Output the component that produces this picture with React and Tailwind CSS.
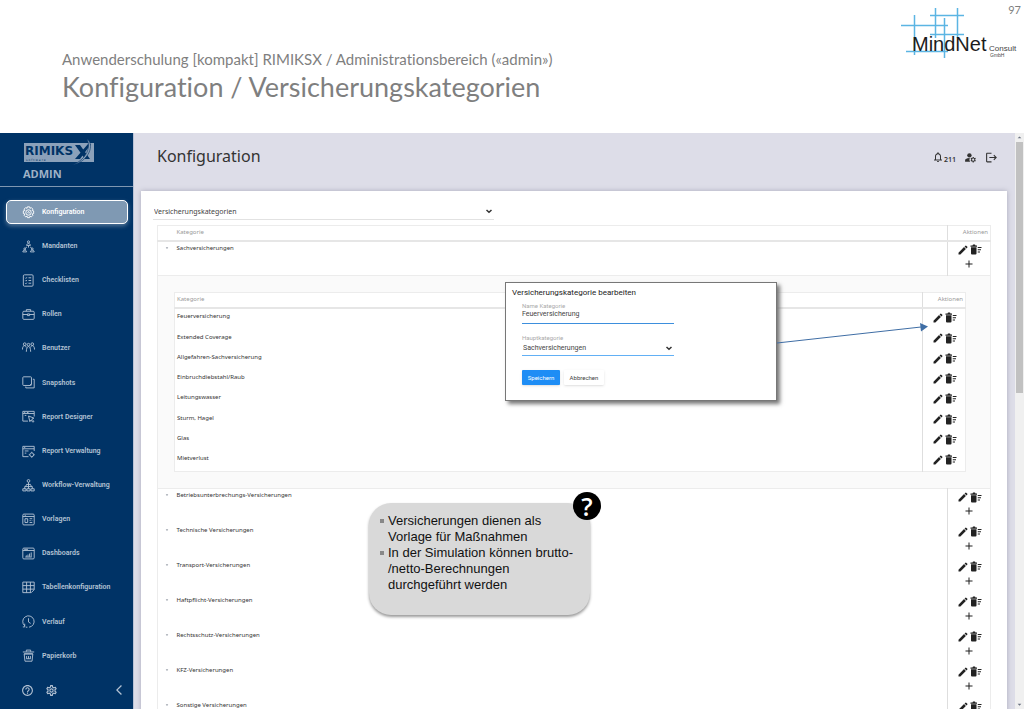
import {
  MdAdd,
  MdEdit,
  MdHelpOutline,
  MdLogout,
  MdManageAccounts,
  MdNotificationsNone,
  MdOutlineSettings,
  MdArrowBackIosNew,
  MdArrowDropDown,
  MdArrowDropUp,
} from "react-icons/md";

const menu = [
  { label: "Konfiguration", icon: "gear", active: true },
  { label: "Mandanten", icon: "clients" },
  { label: "Checklisten", icon: "checklist" },
  { label: "Rollen", icon: "briefcase" },
  { label: "Benutzer", icon: "users" },
  { label: "Snapshots", icon: "snapshots" },
  { label: "Report Designer", icon: "designer" },
  { label: "Report Verwaltung", icon: "reports" },
  { label: "Workflow-Verwaltung", icon: "workflow" },
  { label: "Vorlagen", icon: "templates" },
  { label: "Dashboards", icon: "dashboard" },
  { label: "Tabellenkonfiguration", icon: "table" },
  { label: "Verlauf", icon: "history" },
  { label: "Papierkorb", icon: "trash" },
];

const subCategories = [
  "Feuerversicherung",
  "Extended Coverage",
  "Allgefahren-Sachversicherung",
  "Einbruchdiebstahl/Raub",
  "Leitungswasser",
  "Sturm, Hagel",
  "Glas",
  "Mietverlust",
];

const categories = [
  "Betriebsunterbrechungs-Versicherungen",
  "Technische Versicherungen",
  "Transport-Versicherungen",
  "Haftpflicht-Versicherungen",
  "Rechtsschutz-Versicherungen",
  "KFZ-Versicherungen",
  "Sonstige Versicherungen",
];

const iconShapes = {
  gear: (
    <>
      <path d="M10 1.500h4l.7 2.800 2.500-1.400 2.900 2.900-1.400 2.500 2.800.7v5l-2.800.7 1.400 2.500-2.900 2.900-2.500-1.400-.7 2.800h-4l-.7-2.800-2.500 1.400-2.900-2.900 1.400-2.500-2.800-.7V9l2.800-.7-1.400-2.500 2.900-2.900 2.500 1.400z" />
      <circle cx="12" cy="12" r="5" />
      <path d="M10 11l3 3M11.500 9.500l3 3" />
    </>
  ),
  clients: (
    <>
      <circle cx="12" cy="3.500" r="2" />
      <path d="M8.500 10c0-4.500 7-4.500 7 0zM12 10v4M9 13l-3 2M15 13l3 2" />
      <circle cx="5" cy="16.500" r="1.700" />
      <circle cx="19" cy="16.500" r="1.700" />
      <path d="M1.500 22c0-4.500 7-4.500 7 0zM15.500 22c0-4.500 7-4.500 7 0z" />
    </>
  ),
  checklist: (
    <>
      <rect x="2.500" y="1.500" width="18" height="21" rx="2" />
      <path d="M6 7l1.200 1.200L9 6M12 7h5M6 12l1.200 1.200L9 11M12 12h5M6 17l1.200 1.200L9 16M12 17h5" />
    </>
  ),
  briefcase: (
    <>
      <rect x="1.500" y="6" width="21" height="15" rx="2" />
      <path d="M8 6V3h8v3M1.500 12h8.500M14 12h8.500M10 11h4v3h-4z" />
    </>
  ),
  users: (
    <>
      <circle cx="5" cy="4" r="2.500" />
      <circle cx="12" cy="5" r="2.500" />
      <circle cx="19" cy="4" r="2.500" />
      <path d="M.8 14c0-9 6-9 7-4M8 18c0-13 8-13 8 0M16 10c1-5 7-5 7.200 4" />
    </>
  ),
  snapshots: (
    <>
      <rect x="1.500" y="1.500" width="16" height="16" rx="1.500" />
      <path d="M20 6h2.500v16H7v-2.500M17.500 14l-3.500 3.500" />
    </>
  ),
  designer: (
    <>
      <path d="M11 20.500H1.500v-18h21V12M1.500 6.500h21M4 4.500h2M9 4.500h3M5 10h3" />
      <path d="M12 11l10 4-4 2 4 4-2 1.500-3.500-4-2 3z" />
    </>
  ),
  reports: (
    <>
      <path d="M12 21.500H1.500v-19h21V11M1.500 7h21M4 4.500h2M5 11h7M5 15h3" />
      <circle cx="18" cy="18" r="3.500" />
      <path d="M18 12.500v2M18 21.500v2M12.500 18h2M21.500 18h2" />
    </>
  ),
  workflow: (
    <>
      <circle cx="12" cy="3.500" r="2.500" />
      <path d="M12 6v12M8 10h8M5 18v-4h14v4M9 10l-3 4M15 10l3 4" />
      <path d="M1.500 18h6v4h-6zM9 18h6v4H9zM16.500 18h6v4h-6z" />
    </>
  ),
  templates: (
    <>
      <rect x="1.500" y="2" width="21" height="20" rx="2" />
      <path d="M1.500 6.500h21M5 4.300h2M5.500 10.500h5v7h-5zM14 10.500h5M14 14h2M18 14h1M14 17.500h5" />
    </>
  ),
  dashboard: (
    <>
      <rect x="1.500" y="2" width="21" height="20" rx="2" />
      <path d="M1.500 6.500h21M4 4.300h7M6 18.500h12M8 18v-2.500M11 18v-4M14 18v-6M17 18v-8" />
    </>
  ),
  table: (
    <>
      <path d="M22.500 16V2h-21v19.500H17M1.500 8.500h21M1.500 15h21M8.500 2v19.500M15.500 2v19.500" />
      <path d="M17 21.500l5.500-5.500" />
    </>
  ),
  history: (
    <>
      <path d="M5 20A10.500 10.500 0 1 1 13 22.500M5 16v6H1.500M7 22.500h3" />
      <path d="M12 6v7l4 2.500" />
    </>
  ),
  trash: (
    <>
      <path d="M1.500 5.500h21M8 5V2h8v3M4 9l1.500 13.500h13L20 9zM4 9h16" />
      <path d="M8.500 13v5M12 13v5M15.500 13v5M8 18h8" />
    </>
  ),
};

function MenuIcon({ name }) {
  return (
    <svg
      viewBox="0 0 24 24"
      className="size-[13px] shrink-0"
      fill="none"
      stroke="currentColor"
      strokeWidth="1.700"
      aria-hidden="true"
    >
      {iconShapes[name]}
    </svg>
  );
}

// bin with three list lines on its right side
function DeleteIcon() {
  return (
    <svg viewBox="0 0 24 22" className="h-[11px] w-3" fill="currentColor" aria-hidden="true">
      <path d="M1 3h4l1-2h4l1 2h3v2.500H1zM2 6.500h11V19a2 2 0 0 1-2 2H4a2 2 0 0 1-2-2z" />
      <path d="M15.500 6H23v2h-7.500zM15.500 10.500H22v2h-6.500zM15.500 15H20v2h-4.500z" />
    </svg>
  );
}

function SelectChevron() {
  return (
    <svg
      viewBox="0 0 10 10"
      className="pointer-events-none absolute top-[2px] right-0 size-[10px] text-[#333]"
      fill="none"
      stroke="currentColor"
      strokeWidth="1.500"
      aria-hidden="true"
    >
      <path d="M2.500 4L5 6.300 7.500 4" />
    </svg>
  );
}

function MindNetLogo() {
  return (
    <svg viewBox="0 0 118 52" className="h-[52px] w-[118px]" role="img" aria-label="MindNet Consult GmbH">
      <g stroke="#5bb5e3" strokeWidth="1.500">
        <path d="M0 17.500h47M29 7.500h34M29 26.500h34M5 43.500h42" />
        <path d="M13.500 7v40M34.500 0v30M43.500 10v40M56.500 0v30" />
      </g>
      <text x="11" y="43" fontFamily="Liberation Sans, sans-serif" fontSize="20" fill="#1c1c1c">
        MindNet
      </text>
      <text x="88" y="43" fontFamily="Liberation Sans, sans-serif" fontSize="8" fill="#444">
        Consult
      </text>
      <text x="89" y="49" fontFamily="Liberation Sans, sans-serif" fontSize="5" fill="#444">
        GmbH
      </text>
    </svg>
  );
}

function RimiksLogo() {
  return (
    <svg viewBox="0 0 72 30" className="h-[30px] w-[72px]" role="img" aria-label="RIMIKSX Software">
      <rect x="1" y="7" width="70" height="19" fill="#8ba1ba" />
      <text x="2" y="19" fontFamily="DejaVu Sans, sans-serif" fontWeight="700" fontSize="12" fill="#003366">
        RIMIKS
      </text>
      <text x="3" y="25" fontFamily="DejaVu Sans, sans-serif" fontSize="3" fill="#003366">
        s o f t w a r e
      </text>
      <path d="M52 9h5l10 14h-5zM65 8h3L57 23h-5z" fill="#003366" />
      <path d="M49 29C61 25 69 13 64 3c8 5 2 23-15 26z" fill="#8ba1ba" stroke="#003366" strokeWidth="0.600" />
    </svg>
  );
}

function Sidebar() {
  return (
    <aside className="flex w-[134px] shrink-0 flex-col border-r border-[#b9c2d6] bg-[#003366] font-['Roboto',sans-serif] text-[#b4c3d4]">
      <div className="flex h-[54px] shrink-0 flex-col border-b border-[#7f97b1] pt-[3px] pl-[23px]">
        <RimiksLogo />
        <span className="font-['Open_Sans',sans-serif] text-[11px] leading-4 font-bold text-[#9fb2c6]">ADMIN</span>
      </div>
      <nav className="mt-2 flex flex-1 flex-col">
        {menu.map((item) => (
          <a
            key={item.label}
            href="#"
            className="flex flex-1 items-center pr-[5px] pl-[6px] text-[7px] font-semibold"
          >
            <span
              className={
                item.active
                  ? "flex h-6 w-full items-center gap-[7px] rounded-[5px] border border-white bg-[#7f99b3] pl-[15px] text-white shadow-[0_2px_4px_#7f99b3aa]"
                  : "flex h-6 w-full items-center gap-[7px] pl-4"
              }
            >
              <MenuIcon name={item.icon} />
              {item.label}
            </span>
          </a>
        ))}
      </nav>
      <div className="flex h-9 shrink-0 items-center gap-[11px] pr-2 pb-[2px] pl-[21px]">
        <button type="button" aria-label="Hilfe">
          <MdHelpOutline className="size-[13px]" />
        </button>
        <button type="button" aria-label="Einstellungen">
          <MdOutlineSettings className="size-[13px]" />
        </button>
        <button type="button" aria-label="Menü einklappen" className="ml-auto">
          <MdArrowBackIosNew className="size-3" />
        </button>
      </div>
    </aside>
  );
}

function RowActions({ add }) {
  return (
    <div className="flex flex-col items-center text-[#222]">
      <div className="flex items-center gap-px">
        <button type="button" aria-label="Bearbeiten">
          <MdEdit className="size-3" />
        </button>
        <button type="button" aria-label="Löschen">
          <DeleteIcon />
        </button>
      </div>
      {add && (
        <button type="button" aria-label="Hinzufügen" className="mt-[2px]">
          <MdAdd className="size-3" />
        </button>
      )}
    </div>
  );
}

function CategoryRow({ name, open }) {
  return (
    <tr className="h-[35px] align-top">
      <td className="w-[19px] pt-[3px] pl-[6px]">
        <button type="button" aria-label={name} aria-expanded={!!open} className="block">
          <MdArrowDropDown className="size-[6px] text-gray-500" />
        </button>
      </td>
      <td className="pt-[2px]">{name}</td>
      <td className="w-[43px] border-l border-[#dedede] pt-[2px]">
        <RowActions add />
      </td>
    </tr>
  );
}

function SubTable() {
  return (
    <table className="h-[180px] w-full border border-[#ececec] bg-white">
      <thead>
        <tr className="h-[15px] border-b-2 border-[#e6e6e6] text-left text-[#999]">
          <th className="pl-[2px] font-normal">Kategorie</th>
          <th className="w-[43px] border-l border-[#dedede] pr-[2px] text-right font-normal">Aktionen</th>
        </tr>
      </thead>
      <tbody>
        {subCategories.map((name) => (
          <tr key={name}>
            <td className="pb-1 pl-[2px]">{name}</td>
            <td className="border-l border-[#dedede] pb-[2px]">
              <RowActions />
            </td>
          </tr>
        ))}
      </tbody>
    </table>
  );
}

function CategoryTable() {
  return (
    <table className="w-full border border-[#ececec] font-['Noto_Sans',sans-serif] text-[6px] leading-[9px] text-[#333]">
      <thead>
        <tr className="h-[15px] border-b-2 border-[#e6e6e6] text-left text-[#999]">
          <th aria-label="Aufklappen" />
          <th className="font-normal">Kategorie</th>
          <th className="border-l border-[#dedede] pr-[2px] text-right font-normal">Aktionen</th>
        </tr>
      </thead>
      <tbody>
        <CategoryRow name="Sachversicherungen" open />
        <tr className="border-y border-[#ececec] bg-[#fafafa]">
          <td colSpan={3} className="py-4 pr-6 pl-4">
            <SubTable />
          </td>
        </tr>
        {categories.map((name) => (
          <CategoryRow key={name} name={name} />
        ))}
      </tbody>
    </table>
  );
}

function EditDialog() {
  return (
    <form
      role="dialog"
      aria-labelledby="dialog-title"
      className="absolute top-[149px] left-[371px] h-[119px] w-[272px] border border-[#777] bg-white pt-[5px] pl-[6px] font-['Roboto',sans-serif] text-[7px] text-[#444] shadow-[3px_3px_4px_#777]"
    >
      <h2 id="dialog-title" className="text-[8px] leading-[10px] text-[#222]">
        Versicherungskategorie bearbeiten
      </h2>
      <div className="ml-[10px] flex w-[152px] flex-col">
        <label htmlFor="name" className="mt-1 text-[6px] leading-[7px] text-[#aaa]">
          Name Kategorie
        </label>
        <input
          id="name"
          defaultValue="Feuerversicherung"
          className="h-[15px] border-b border-[#3d8fdd] pb-1 leading-[9px] outline-none"
        />
        <label htmlFor="parent" className="mt-[10px] text-[6px] leading-[7px] text-[#aaa]">
          Hauptkategorie
        </label>
        <div className="relative">
          <select
            id="parent"
            className="block h-[15px] w-full appearance-none border-b border-[#62b0f5] px-px leading-[9px] outline-none"
          >
            <option>Sachversicherungen</option>
          </select>
          <SelectChevron />
        </div>
        <div className="mt-[14px] flex gap-1 text-[6px]">
          <button type="button" className="h-[15px] w-[38px] rounded-[1px] bg-[#1e8df5] text-white shadow">
            Speichern
          </button>
          <button type="button" className="h-[15px] w-10 rounded-[1px] bg-white shadow">
            Abbrechen
          </button>
        </div>
      </div>
    </form>
  );
}

function Arrow() {
  return (
    <svg viewBox="0 0 152 26" className="absolute top-[188px] left-[643px] h-[26px] w-[152px]" aria-hidden="true">
      <path d="M0 22L144 6" stroke="#3f6ea5" strokeWidth="1" />
      <path d="M143 2l8 3.500-7 5z" fill="#3f6ea5" />
    </svg>
  );
}

function Note() {
  return (
    <div className="absolute top-[370px] left-[235px] h-28 w-[221px] rounded-[22px] bg-[#d9d9d9] pt-[10px] pl-[11px] font-['Liberation_Sans',sans-serif] text-[13px] leading-4 text-[#111] shadow-[0_2px_3px_#999]">
      <ul className="list-none">
        <li className="flex">
          <span className="mt-[6px] mr-1 size-1 shrink-0 bg-[#888]" />
          <span>
            Versicherungen dienen als
            <br />
            Vorlage für Maßnahmen
          </span>
        </li>
        <li className="flex">
          <span className="mt-[6px] mr-1 size-1 shrink-0 bg-[#888]" />
          <span>
            In der Simulation können brutto-
            <br />
            /netto-Berechnungen
            <br />
            durchgeführt werden
          </span>
        </li>
      </ul>
      <span className="absolute -top-[11px] -right-[11px] flex size-7 items-center justify-center rounded-full bg-black font-['Open_Sans',sans-serif] text-[25px] font-semibold text-white">
        ?
      </span>
    </div>
  );
}

export default function App() {
  return (
    <div className="flex h-screen flex-col overflow-hidden bg-white">
      <header className="flex h-[133px] shrink-0 justify-between font-['Lato',sans-serif] text-[#7f7f7f] [font-variant-ligatures:none]">
        <div className="pt-[49px] pl-[62px]">
          <p className="text-[15px] leading-5">
            Anwenderschulung [kompakt] RIMIKSX / Administrationsbereich («admin»)
          </p>
          <h1 className="text-[27px] leading-9">Konfiguration / Versicherungskategorien</h1>
        </div>
        <div className="relative pt-2 pr-[5px]">
          <MindNetLogo />
          <span className="absolute top-1 right-[3px] text-[11px] leading-3">97</span>
        </div>
      </header>

      <div className="flex min-h-0 flex-1">
        <Sidebar />
        <main className="relative flex min-w-0 flex-1 flex-col overflow-hidden bg-[#dddde8]">
          <div className="flex h-[58px] shrink-0 items-start justify-between pt-3 pr-[17px] pl-[23px] text-[#333]">
            <h2 className="font-['Noto_Sans',sans-serif] text-[16px] leading-[22px]">Konfiguration</h2>
            <div className="flex h-6 items-center gap-2">
              <button type="button" aria-label="Benachrichtigungen" className="flex items-center">
                <MdNotificationsNone className="size-3" />
                <sub className="top-[3px] font-['Noto_Sans',sans-serif] text-[7px] font-semibold">211</sub>
              </button>
              <button type="button" aria-label="Konto">
                <MdManageAccounts className="size-[13px]" />
              </button>
              <button type="button" aria-label="Abmelden">
                <MdLogout className="size-[13px]" />
              </button>
            </div>
          </div>

          <section className="mr-2 ml-[7px] flex-1 bg-white pt-[13px] pr-4 pl-4 shadow-[0_0_5px_#aaaabb]">
            <div className="relative -ml-1 w-[341px]">
              <select
                aria-label="Bereich"
                className="block h-4 w-full appearance-none border-b border-[#e2e2e2] pl-px font-['Noto_Sans',sans-serif] text-[7px] leading-[10px] text-[#444] outline-none"
              >
                <option>Versicherungskategorien</option>
              </select>
              <SelectChevron />
            </div>
            <div className="mt-[5px]">
              <CategoryTable />
            </div>
          </section>

          <EditDialog />
          <Arrow />
          <Note />
        </main>

        <div className="flex w-[9px] shrink-0 flex-col items-center bg-[#f0f0f0] text-gray-500" aria-hidden="true">
          <MdArrowDropUp className="size-[9px] shrink-0" />
          <div className="h-[251px] w-[7px] bg-[#c1c1c1]" />
          <MdArrowDropDown className="mt-auto size-[9px] shrink-0" />
        </div>
      </div>
    </div>
  );
}
